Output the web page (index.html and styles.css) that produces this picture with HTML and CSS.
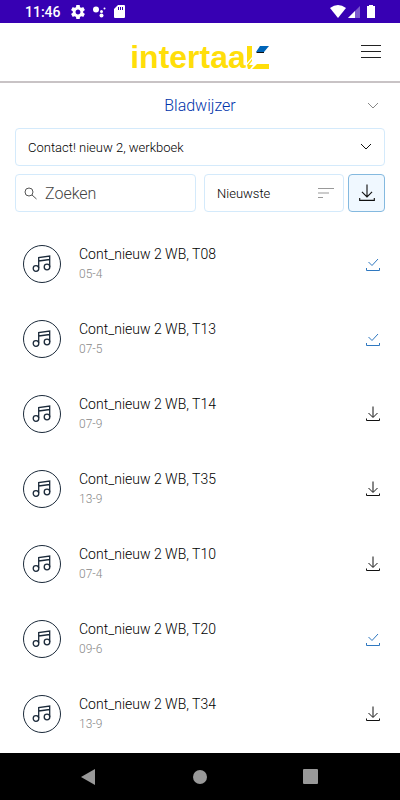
FILE: index.html
```html
<!DOCTYPE html>
<html lang="nl">
<head>
    <meta charset="UTF-8">
    <meta name="viewport" content="width=device-width, initial-scale=1.0">
    <title>Intertaal - Bladwijzer</title>
    <link rel="stylesheet" href="styles.css">
</head>
<body>
    <!-- icons used more than once -->
    <svg class="sprite" aria-hidden="true">
        <symbol id="music" viewBox="0 0 20 20">
            <g stroke-width="1.300">
                <circle cx="4" cy="14.500" r="2.800"/>
                <circle cx="15" cy="13" r="2.800"/>
                <path d="M6.700 14V3.500L17.700 2V13M6.700 7L17.700 5.500"/>
            </g>
        </symbol>
        <symbol id="download" viewBox="0 0 16 16">
            <path d="M8 0.500V11M3.500 7L8 11.500L12.500 7M1.500 12.500V14.500H14.500V12.500"/>
        </symbol>
        <symbol id="done" viewBox="0 0 16 16">
            <path d="M3.500 6L7 9.500L13 3M1.500 12V14.500H14.500V12"/>
        </symbol>
    </svg>

    <div class="status-bar">
        <span class="time">11:46</span>
        <svg width="14" height="14" viewBox="2 2 20 20"><path d="M19.430 12.980c.04-.32.070-.64.070-.98s-.03-.66-.07-.98l2.110-1.650c.19-.15.240-.42.120-.64l-2-3.460c-.12-.22-.39-.3-.61-.22l-2.490 1c-.52-.4-1.080-.73-1.690-.98l-.38-2.650C14.460 2.180 14.250 2 14 2h-4c-.25 0-.46.180-.49.420l-.38 2.650c-.61.250-1.170.590-1.690.980l-2.490-1c-.23-.09-.49 0-.61.220l-2 3.460c-.13.220-.07.490.120.640l2.110 1.650c-.04.320-.07.650-.07.980s.03.660.070.980l-2.110 1.650c-.19.150-.24.420-.12.640l2 3.460c.12.220.390.300.610.220l2.490-1c.52.400 1.080.730 1.690.980l.38 2.650c.03.240.240.420.490.420h4c.25 0 .46-.18.490-.42l.38-2.650c.61-.25 1.170-.59 1.690-.98l2.490 1c.23.090.490 0 .61-.22l2-3.460c.12-.22.070-.49-.12-.64l-2.110-1.650zM12 15.500c-1.930 0-3.500-1.570-3.500-3.500s1.570-3.500 3.500-3.500 3.500 1.570 3.500 3.500-1.570 3.500-3.500 3.500z"/></svg>
        <svg width="13" height="12" viewBox="0 0 13 12"><circle cx="3" cy="3.500" r="3"/><circle cx="8.500" cy="5.500" r="1.500"/><circle cx="8.500" cy="9.500" r="2"/><circle cx="11.500" cy="2.500" r="1"/></svg>
        <svg width="11" height="13" viewBox="0 0 11 13"><path fill-rule="evenodd" d="M4 0H10Q11 0 11 1V12Q11 13 10 13H1Q0 13 0 12V4ZM4 2V5H5V2ZM6 2V5H7V2ZM8 2V5H9V2Z"/></svg>
        <div class="signals">
            <svg width="16" height="13" viewBox="0 0 16 13"><path d="M0 3Q8-3 16 3L8 13Z"/></svg>
            <svg width="12" height="12" viewBox="0 0 12 12"><path d="M0 12L12 0V12Z" opacity=".35"/><path d="M0 12L7 5V12Z"/></svg>
            <svg class="battery" width="8" height="13" viewBox="0 0 8 13"><path d="M2 1V0H6V1H8V13H0V1Z"/></svg>
        </div>
    </div>

    <header>
        <a href="#" class="logo" aria-label="intertaal">
            <span>intertaa</span>
            <svg width="24" height="24" viewBox="0 0 24 24">
                <path fill="#ffde0a" d="M1 1H6V12L1 18ZM1 20L6 14V16L3 20ZM6 24L11 19H23V24Z"/>
                <path fill="#ffde0a" d="M1 20L2 24H4L7 20Z"/>
                <path fill="#0065b8" d="M14 1H23L18 7H10Z"/>
                <path fill="#111" d="M10 7H18V8H11Z"/>
            </svg>
        </a>
        <button class="menu" aria-label="Menu">
            <svg width="20" height="14" viewBox="0 0 20 14"><path d="M0 .5H20M0 6.500H20M0 12.500H20"/></svg>
        </button>
    </header>

    <main>
        <button class="bookmark">
            <span>Bladwijzer</span>
            <svg class="chevron" width="12" height="8" viewBox="0 0 12 8"><path d="M1 1L6 6L11 1"/></svg>
        </button>

        <form class="filters">
            <div class="field book">
                <select aria-label="Boek">
                    <option>Contact! nieuw 2, werkboek</option>
                </select>
                <svg class="chevron" width="12" height="8" viewBox="0 0 12 8"><path d="M1 1L6 6L11 1"/></svg>
            </div>
            <div class="field search">
                <svg width="13" height="13" viewBox="0 0 13 13"><circle cx="5" cy="5" r="4"/><path d="M8 8L12.500 12"/></svg>
                <input type="text" placeholder="Zoeken" aria-label="Zoeken">
            </div>
            <div class="list-tools">
                <div class="field sort">
                    <select aria-label="Sorteren">
                        <option>Nieuwste</option>
                    </select>
                    <svg width="16" height="11" viewBox="0 0 16 11"><path d="M0 .5H16M0 5H11M0 9.500H5"/></svg>
                </div>
                <button type="button" class="download-all" aria-label="Alles downloaden">
                    <svg width="18" height="18"><use href="#download"/></svg>
                </button>
            </div>
        </form>

        <ul class="tracks">
            <li>
                <span class="note"><svg width="20" height="20"><use href="#music"/></svg></span>
                <div class="info"><h2>Cont_nieuw 2 WB, T08</h2><p>05-4</p></div>
                <button class="done" aria-label="Gedownload"><svg width="16" height="16"><use href="#done"/></svg></button>
            </li>
            <li>
                <span class="note"><svg width="20" height="20"><use href="#music"/></svg></span>
                <div class="info"><h2>Cont_nieuw 2 WB, T13</h2><p>07-5</p></div>
                <button class="done" aria-label="Gedownload"><svg width="16" height="16"><use href="#done"/></svg></button>
            </li>
            <li>
                <span class="note"><svg width="20" height="20"><use href="#music"/></svg></span>
                <div class="info"><h2>Cont_nieuw 2 WB, T14</h2><p>07-9</p></div>
                <button aria-label="Downloaden"><svg width="16" height="16"><use href="#download"/></svg></button>
            </li>
            <li>
                <span class="note"><svg width="20" height="20"><use href="#music"/></svg></span>
                <div class="info"><h2>Cont_nieuw 2 WB, T35</h2><p>13-9</p></div>
                <button aria-label="Downloaden"><svg width="16" height="16"><use href="#download"/></svg></button>
            </li>
            <li>
                <span class="note"><svg width="20" height="20"><use href="#music"/></svg></span>
                <div class="info"><h2>Cont_nieuw 2 WB, T10</h2><p>07-4</p></div>
                <button aria-label="Downloaden"><svg width="16" height="16"><use href="#download"/></svg></button>
            </li>
            <li>
                <span class="note"><svg width="20" height="20"><use href="#music"/></svg></span>
                <div class="info"><h2>Cont_nieuw 2 WB, T20</h2><p>09-6</p></div>
                <button class="done" aria-label="Gedownload"><svg width="16" height="16"><use href="#done"/></svg></button>
            </li>
            <li>
                <span class="note"><svg width="20" height="20"><use href="#music"/></svg></span>
                <div class="info"><h2>Cont_nieuw 2 WB, T34</h2><p>13-9</p></div>
                <button aria-label="Downloaden"><svg width="16" height="16"><use href="#download"/></svg></button>
            </li>
        </ul>
    </main>

    <nav>
        <button aria-label="Terug"><svg width="16" height="16" viewBox="0 0 16 16"><path d="M0 8L14 0V16Z"/></svg></button>
        <button aria-label="Start"><svg width="16" height="16" viewBox="0 0 16 16"><circle cx="8" cy="8" r="7"/></svg></button>
        <button aria-label="Recent"><svg width="16" height="16" viewBox="0 0 16 16"><rect width="15" height="15" rx="1"/></svg></button>
    </nav>
</body>
</html>
```
FILE: styles.css
```css
* {
    box-sizing: border-box;
}
body {
    margin: 0;
    min-height: 100vh;
    display: flex;
    flex-direction: column;
    background-color: #fff;
    color: #000;
    font-family: Roboto, sans-serif;
    font-size: 13px;
}
button {
    display: flex;
    align-items: center;
    justify-content: center;
    padding: 0;
    border: none;
    background: none;
    color: inherit;
    font-family: inherit;
    cursor: pointer;
}
svg {
    display: block;
    flex-shrink: 0;
}
.sprite {
    position: absolute;
    width: 0;
    height: 0;
}
.status-bar {
    display: flex;
    align-items: center;
    gap: 8px;
    height: 23px;
    padding: 0 25px;
    background-color: #3700b3;
    color: #fff;
    fill: #fff;
}
.time {
    margin-right: 2px;
    font-size: 14px;
    font-weight: 500;
}
.signals {
    display: flex;
    align-items: center;
    gap: 2px;
    margin-left: auto;
}
.battery {
    margin-left: 5px;
}
header {
    display: grid;
    grid-template-columns: 1fr auto 1fr;
    align-items: center;
    height: 60px;
    padding: 0 19px;
    border-bottom: 2px solid #c8c3c5;
}
.logo {
    display: flex;
    align-items: center;
    grid-column: 2;
    padding-top: 10px;
    color: #ffde0a;
    font-family: "Liberation Sans", Arial, sans-serif;
    font-size: 32px;
    font-weight: bold;
    line-height: 32px;
    text-decoration: none;
}
.menu {
    justify-self: end;
    stroke: #222;
}
.menu svg,
.chevron,
.search svg,
.download-all svg,
.tracks svg {
    fill: none;
}
main {
    flex: 1;
    padding: 0 15px;
}
.bookmark {
    display: grid;
    grid-template-columns: 1fr auto 1fr;
    width: 100%;
    height: 45px;
    padding: 0 6px;
    color: #0033aa;
    font-size: 16px;
    font-weight: 300;
}
.bookmark span {
    grid-column: 2;
}
.bookmark .chevron {
    justify-self: end;
    stroke: #888;
}
.filters {
    display: grid;
    grid-template-columns: minmax(0, 1fr) minmax(0, 1fr);
    gap: 8px;
}
.field {
    display: flex;
    align-items: center;
    height: 38px;
    border: 1px solid #d4eafb;
    border-radius: 4px;
}
.field select,
.field input {
    flex: 1;
    min-width: 0;
    height: 100%;
    padding: 0;
    border: none;
    outline: none;
    appearance: none;
    background: none;
    color: #000;
    font-family: inherit;
    font-size: 13px;
    font-weight: 300;
}
.book,
.sort {
    padding: 0 12px;
}
.book {
    grid-column: 1 / -1;
}
.book .chevron {
    stroke: #111;
}
.search {
    gap: 8px;
    padding: 0 8px;
}
.search svg {
    stroke: #555;
}
.field input {
    font-size: 16px;
}
.field input::placeholder {
    color: #444;
}
.list-tools {
    display: flex;
    gap: 4px;
}
.sort {
    flex: 1;
    padding-right: 9px;
}
.sort svg {
    stroke: #999;
}
.download-all {
    width: 37px;
    height: 38px;
    border: 1px solid #84b9df;
    border-radius: 4px;
    background-color: #f0f8ff;
    stroke: #111;
}
.tracks {
    margin: 0;
    padding: 14px 0 0;
    list-style: none;
}
.tracks li {
    display: flex;
    align-items: center;
    gap: 18px;
    height: 75px;
    padding: 0 4px 0 8px;
}
.note {
    display: flex;
    align-items: center;
    justify-content: center;
    width: 38px;
    height: 38px;
    border: 1px solid #1b2a3a;
    border-radius: 50%;
    stroke: #1b2a3a;
}
.info {
    flex: 1;
}
.info h2 {
    margin: 0;
    font-size: 14px;
    font-weight: 300;
    line-height: 20px;
}
.info p {
    margin: 0;
    color: #888;
    font-size: 12px;
    font-weight: 300;
    line-height: 20px;
}
.tracks button {
    stroke: #111;
}
.tracks .done {
    stroke: #2f78c0;
}
nav {
    display: flex;
    align-items: center;
    justify-content: center;
    gap: 95px;
    height: 47px;
    background-color: #000;
    fill: #999;
}
```
